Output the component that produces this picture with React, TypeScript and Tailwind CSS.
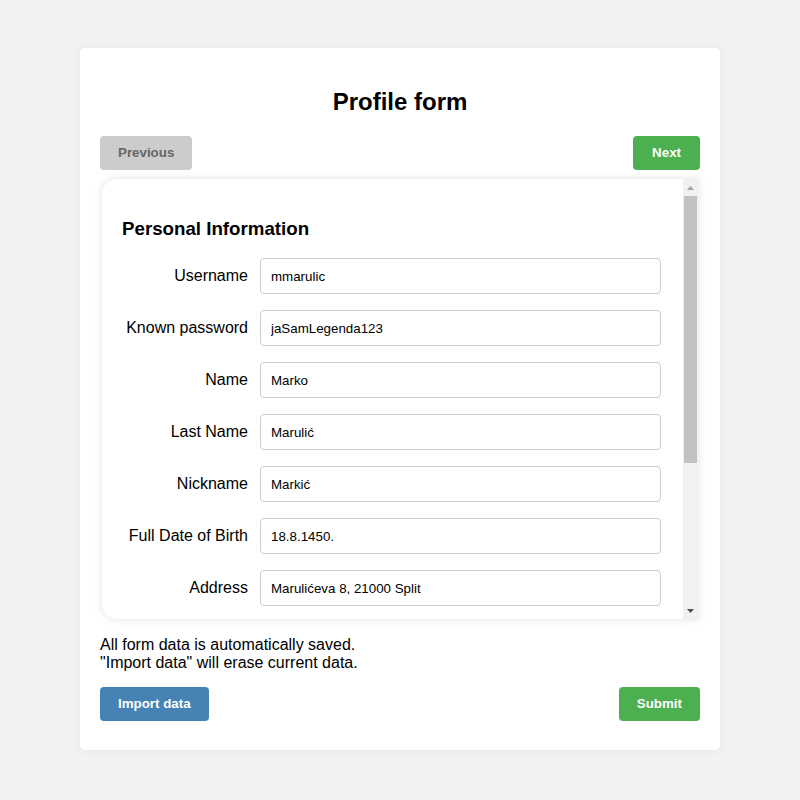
const fields = [
  { label: "Username", value: "mmarulic" },
  { label: "Known password", value: "jaSamLegenda123" },
  { label: "Name", value: "Marko" },
  { label: "Last Name", value: "Marulić" },
  { label: "Nickname", value: "Markić" },
  { label: "Full Date of Birth", value: "18.8.1450." },
  { label: "Address", value: "Marulićeva 8, 21000 Split" },
  { label: "City", value: "Split" },
  { label: "Country", value: "Croatia" },
  { label: "Phone", value: "+385 21 123 456" },
  { label: "Email", value: "marko@marulic.hr" },
];

function ScrollBar() {
  return (
    <div className="flex w-[15px] shrink-0 flex-col bg-[#f1f1f1]">
      <div className="flex h-[17px] items-center justify-center">
        <svg width="7" height="4" viewBox="0 0 7 4">
          <path d="M3.5 0 L7 4 L0 4 Z" fill="#a3a3a3" />
        </svg>
      </div>
      <div className="mx-px h-[267px] bg-[#c1c1c1]" />
      <div className="flex-1" />
      <div className="flex h-[17px] items-center justify-center">
        <svg width="7" height="4" viewBox="0 0 7 4">
          <path d="M0 0 L7 0 L3.5 4 Z" fill="#505050" />
        </svg>
      </div>
    </div>
  );
}

export default function App() {
  return (
    <div className="min-h-[800px] bg-[#f2f2f2] pt-[48px] font-['Liberation_Sans',Arial,sans-serif] text-black">
      <div className="mx-auto w-[640px] rounded-[5px] bg-white px-5 pt-[40px] pb-[29px] shadow-[0_0_10px_rgba(0,0,0,0.06)]">
        {/* TITLE */}
        <h2 className="text-center text-[24px] leading-[28px] font-bold">Profile form</h2>

        {/* NAV */}
        <div className="mt-5 flex justify-between">
          <button className="h-[34px] rounded-[4px] bg-[#cccccc] px-[18px] text-[13.33px] font-bold text-[#666666]">
            Previous
          </button>
          <button className="h-[34px] rounded-[4px] bg-[#4caf50] px-[19px] text-[13.33px] font-bold text-white">
            Next
          </button>
        </div>

        {/* SCROLL PANEL */}
        <div className="mx-[2px] mt-[9px] flex h-[440px] rounded-l-[15px] bg-white shadow-[0_0_8px_rgba(0,0,0,0.12)]">
          <div className="flex-1 overflow-hidden px-5 pt-5">
            <h3 className="mt-[19px] text-[18.72px] leading-[22px] font-bold">Personal Information</h3>
            <div className="mt-[18px] flex flex-col gap-4">
              {fields.map((f) => (
                <div key={f.label} className="flex items-center gap-3">
                  <label className="w-[126px] shrink-0 text-right text-[16px] leading-[18px]">{f.label}</label>
                  <input
                    readOnly
                    value={f.value}
                    className="h-[36px] w-[401px] rounded-[4px] border border-[#cccccc] px-[10px] text-[13.33px] text-black outline-none"
                  />
                </div>
              ))}
            </div>
          </div>
          <ScrollBar />
        </div>

        {/* NOTE */}
        <p className="mt-[17px] text-[16px] leading-[18px]">
          All form data is automatically saved.
          <br />
          "Import data" will erase current data.
        </p>

        {/* ACTIONS */}
        <div className="mt-[15px] flex justify-between">
          <button className="h-[34px] rounded-[4px] bg-[#4682b4] px-[18px] text-[13.33px] font-bold text-white">
            Import data
          </button>
          <button className="h-[34px] rounded-[4px] bg-[#4caf50] px-[18px] text-[13.33px] font-bold text-white">
            Submit
          </button>
        </div>
      </div>
    </div>
  );
}
